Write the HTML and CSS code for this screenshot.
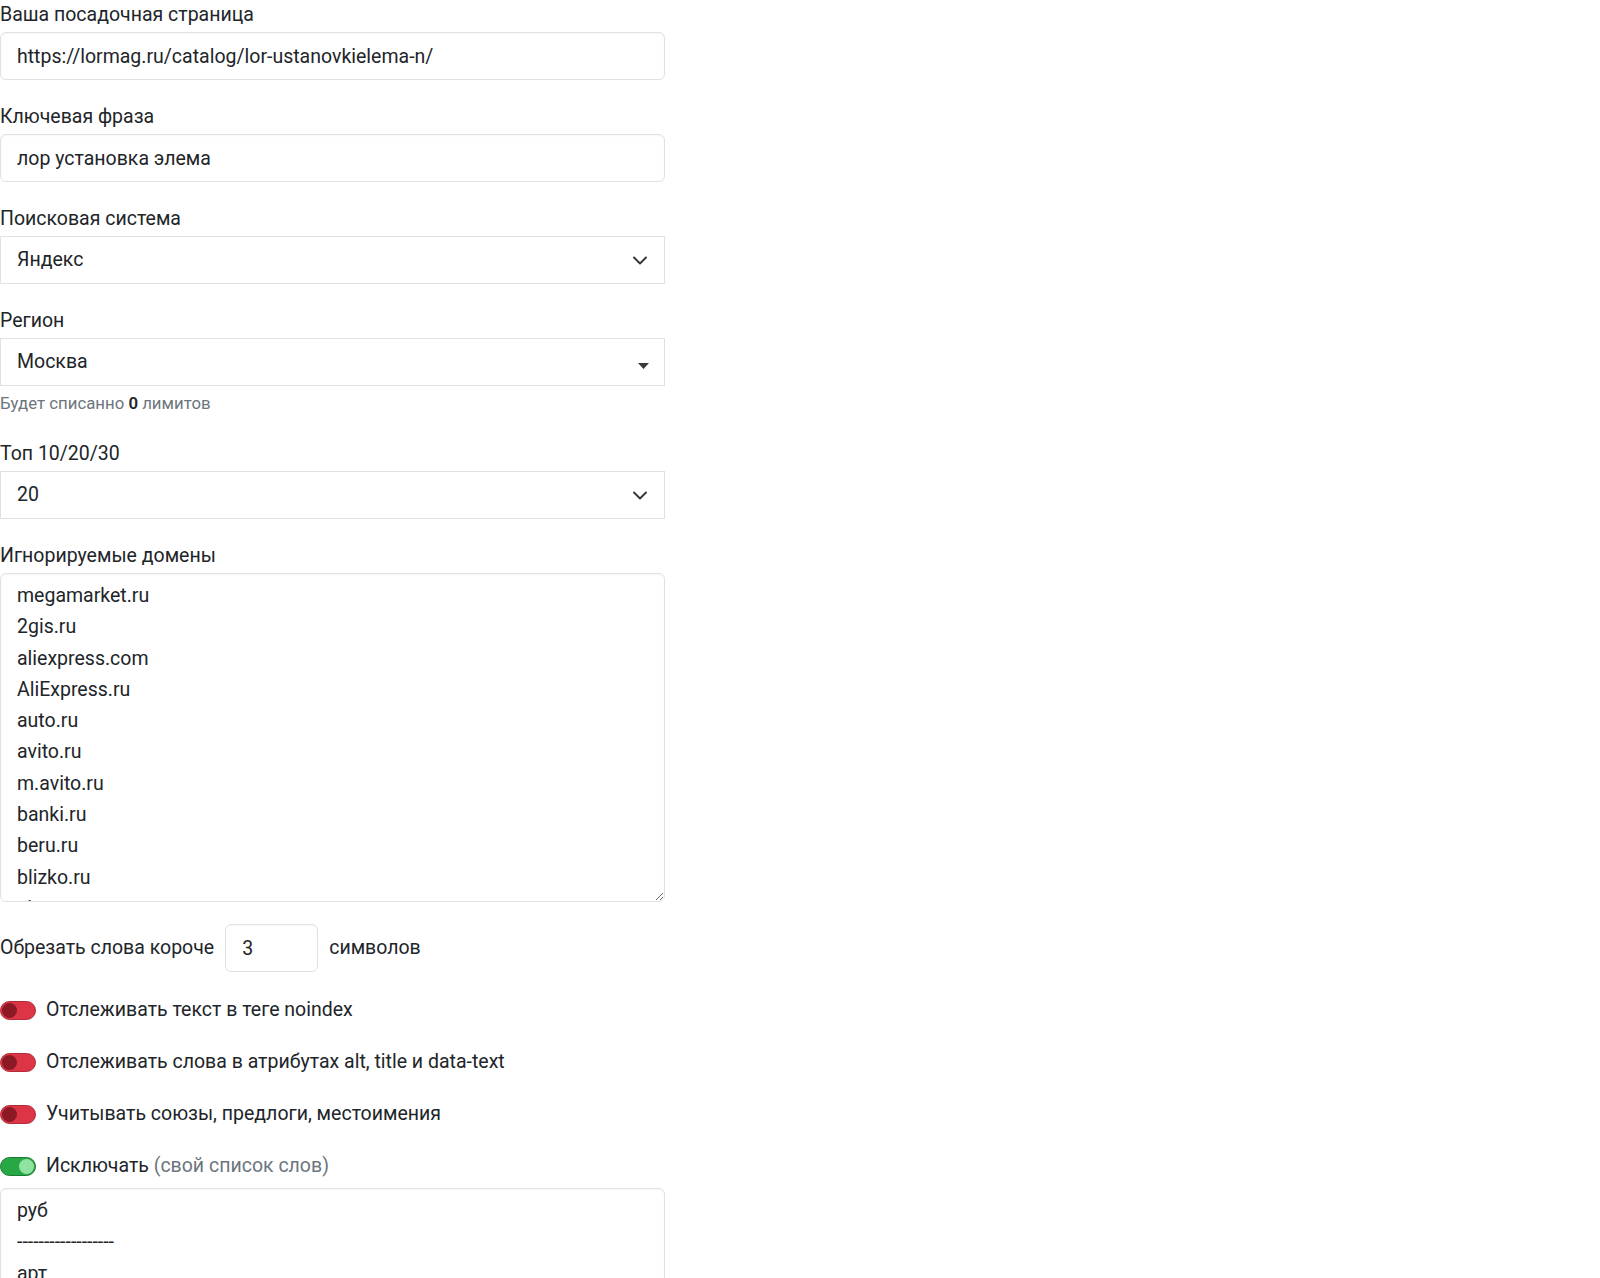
FILE: index.html
```html
<!DOCTYPE html>
<html lang="ru">
<head>
<meta charset="utf-8">
<title>Форма</title>
<link rel="stylesheet" href="styles.css">
</head>
<body>
<form class="form">
  <div class="field">
    <label class="label">Ваша посадочная страница</label>
    <input class="input" type="text" value="https://lormag.ru/catalog/lor-ustanovkielema-n/">
  </div>
  <div class="field">
    <label class="label">Ключевая фраза</label>
    <input class="input" type="text" value="лор установка элема">
  </div>
  <div class="field">
    <label class="label">Поисковая система</label>
    <div class="select-wrap">
      <select class="select"><option>Яндекс</option><option>Google</option></select>
      <svg class="chevron" width="16" height="12" viewBox="0 0 16 12"><path d="M2 3.5 L8 9.5 L14 3.5" fill="none" stroke="#343a40" stroke-width="2" stroke-linecap="round" stroke-linejoin="round"/></svg>
    </div>
  </div>
  <div class="field field-help">
    <label class="label">Регион</label>
    <div class="select-wrap">
      <div class="select select-div">Москва</div>
      <svg class="caret" width="11" height="6" viewBox="0 0 11 6"><path d="M0 0 L11 0 L5.5 6 Z" fill="#3a3a3a"/></svg>
    </div>
    <div class="help">Будет списанно <b>0</b> лимитов</div>
  </div>
  <div class="field">
    <label class="label">Топ 10/20/30</label>
    <div class="select-wrap">
      <select class="select"><option>10</option><option selected>20</option><option>30</option></select>
      <svg class="chevron" width="16" height="12" viewBox="0 0 16 12"><path d="M2 3.5 L8 9.5 L14 3.5" fill="none" stroke="#343a40" stroke-width="2" stroke-linecap="round" stroke-linejoin="round"/></svg>
    </div>
  </div>
  <div class="field">
    <label class="label">Игнорируемые домены</label>
    <textarea class="textarea textarea-domains">megamarket.ru
2gis.ru
aliexpress.com
AliExpress.ru
auto.ru
avito.ru
m.avito.ru
banki.ru
beru.ru
blizko.ru
cian.ru
citilink.ru
dns-shop.ru
drom.ru
eldorado.ru</textarea>
  </div>
  <div class="row-inline">
    <span>Обрезать слова короче</span>
    <input class="input input-small" type="text" value="3">
    <span>символов</span>
  </div>
  <div class="switch-row">
    <span class="switch off"><span class="knob"></span></span>
    <span>Отслеживать текст в теге noindex</span>
  </div>
  <div class="switch-row">
    <span class="switch off"><span class="knob"></span></span>
    <span>Отслеживать слова в атрибутах alt, title и data-text</span>
  </div>
  <div class="switch-row">
    <span class="switch off"><span class="knob"></span></span>
    <span>Учитывать союзы, предлоги, местоимения</span>
  </div>
  <div class="switch-row switch-last">
    <span class="switch on"><span class="knob"></span></span>
    <span>Исключать <span class="muted">(свой список слов)</span></span>
  </div>
  <textarea class="textarea textarea-words">руб
------------------
арт
шт
гр
кг
мл
см</textarea>
</form>
</body>
</html>
```

FILE: styles.css
```css
* { box-sizing: border-box; }
html, body { margin: 0; padding: 0; background: #fff; }
body {
  font-family: Roboto, "Liberation Sans", sans-serif;
  font-size: 19.5px;
  line-height: 1.5;
  color: #212529;
  height: 1278px;
  overflow: hidden;
}
.form {
  width: 665px;
  display: flex;
  flex-direction: column;
}
.field {
  display: flex;
  flex-direction: column;
  margin-bottom: 22px;
}
.field-help { margin-bottom: 24px; }
.label {
  display: block;
  line-height: 30px;
  margin-bottom: 2px;
}
.input, .select, .textarea {
  font: inherit;
  color: #212529;
  width: 100%;
  height: 48px;
  padding: 8px 16px;
  border: 1px solid #dee2e6;
  background: #fff;
  outline: none;
}
.input, .textarea {
  border-radius: 6px;
  box-shadow: inset 0 1px 2px rgba(0,0,0,0.04);
}
.select {
  border-radius: 0;
  appearance: none;
  -webkit-appearance: none;
}
.select-div { display: flex; align-items: center; }
.select-wrap { position: relative; }
.chevron { position: absolute; right: 17px; top: 18px; pointer-events: none; }
.caret { position: absolute; right: 16px; top: 25px; pointer-events: none; }
.help {
  font-size: 16.8px;
  line-height: 24px;
  margin-top: 5px;
  color: #6c757d;
}
.help b { color: #212529; font-weight: 600; }
.textarea {
  height: 329px;
  resize: vertical;
  padding: 6px 16px;
  line-height: 31.3px;
  overflow-y: auto;
  scrollbar-width: none;
}
.textarea::-webkit-scrollbar { width: 0; height: 0; }
.row-inline {
  display: flex;
  align-items: center;
  gap: 11px;
  height: 48px;
  margin-bottom: 23px;
}
.input-small { width: 93px; height: 48px; }
.switch-row {
  display: flex;
  align-items: center;
  gap: 10px;
  height: 30px;
  margin-bottom: 22px;
}
.switch-row.switch-last { margin-bottom: 7px; }
.switch {
  display: inline-flex;
  align-items: center;
  width: 36px;
  height: 19px;
  border-radius: 10px;
  padding: 0 1px;
  flex: none;
}
.switch .knob {
  width: 15px;
  height: 15px;
  border-radius: 50%;
}
.switch.off { background: #dc3545; border: 1px solid #b52a38; }
.switch.off .knob { background: #8b1a26; }
.switch.on { background: #28a745; border: 1px solid #1c7a32; justify-content: flex-end; }
.switch.on .knob { background: #8fe3a0; }
.muted { color: #6c757d; }
.textarea-words { height: 200px; }
```
